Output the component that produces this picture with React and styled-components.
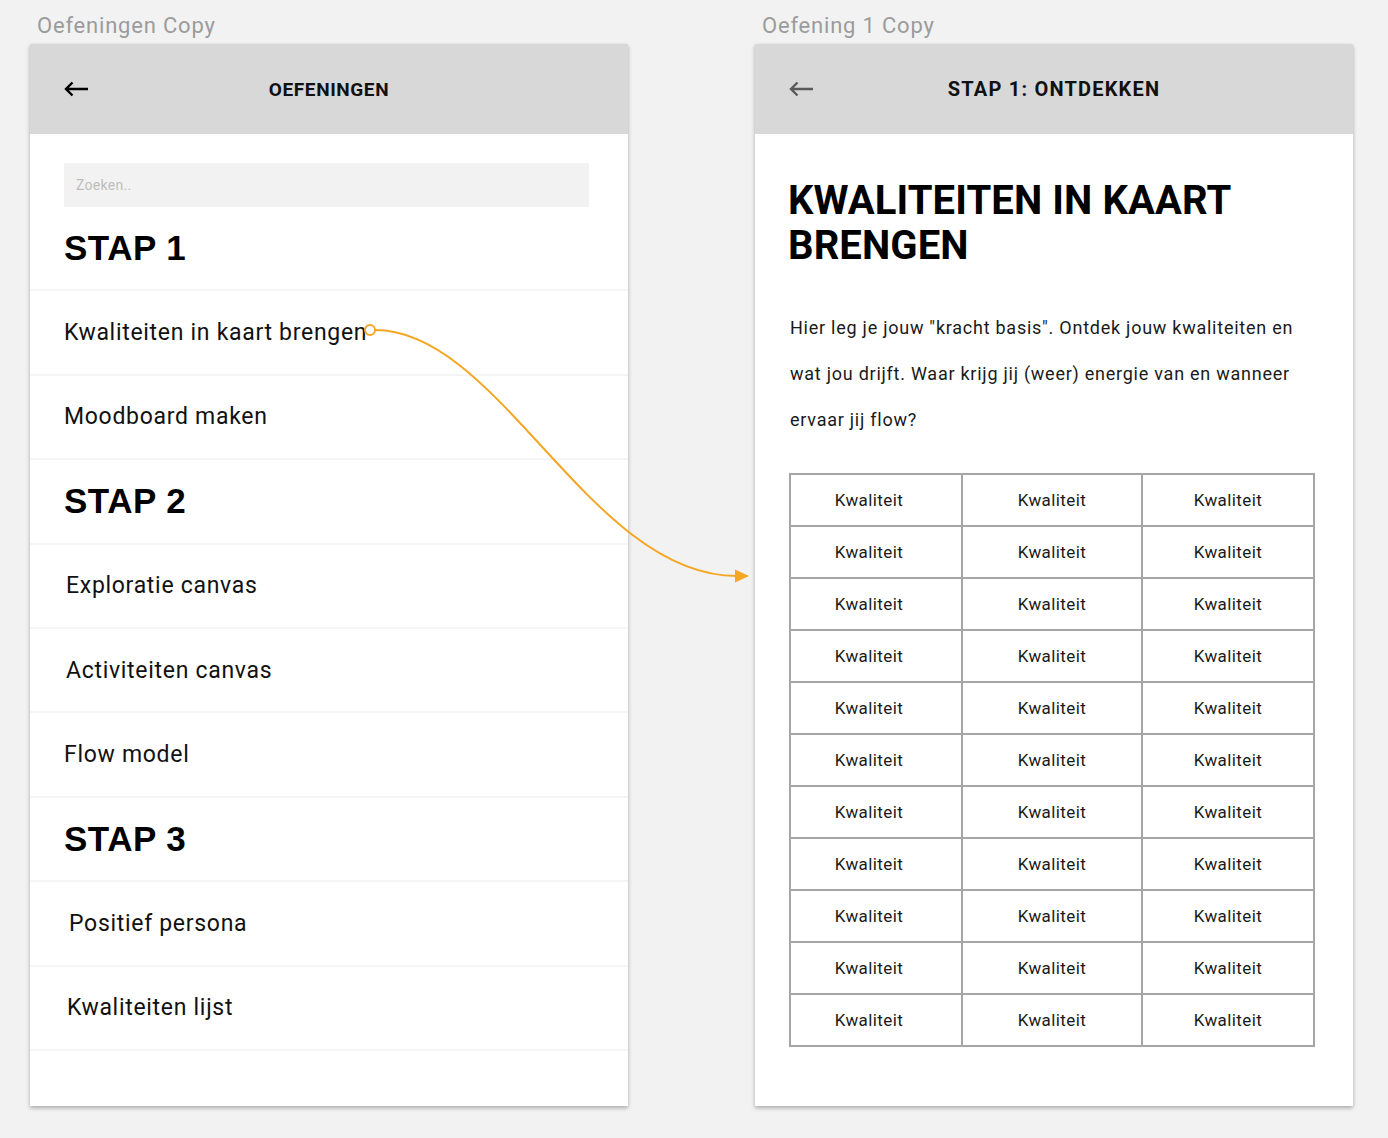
import React from "react"
import styled, { createGlobalStyle } from "styled-components"

const GlobalStyle = createGlobalStyle`
  body {
    margin: 0;
    background: #f2f2f2;
    font-family: Roboto, "Noto Sans", sans-serif;
  }
`

const Canvas = styled.div`
  position: relative;
  display: flex;
  gap: 127px;
  padding: 14px 0 0 30px;
  height: 1124px;
`

const Artboard = styled.div`
  width: 598px;
  display: flex;
  flex-direction: column;
`

const Label = styled.div`
  font-size: 22px;
  line-height: 24px;
  color: #9b9b9b;
  padding-left: 7px;
  margin-bottom: 6px;
  letter-spacing: 0.8px;
`

const Screen = styled.div`
  height: 1062px;
  background: #fff;
  box-shadow: 0 2px 4px rgba(0, 0, 0, 0.3);
  overflow: hidden;
`

const Header = styled.div`
  height: 90px;
  background: #d8d8d8;
  display: grid;
  grid-template-columns: 1fr auto 1fr;
  align-items: center;
  padding: 0 34px;
`

const Title = styled.div`
  font-size: ${(p) => (p.$wide ? 20 : 19)}px;
  font-weight: 700;
  letter-spacing: ${(p) => (p.$wide ? 1.2 : 0.6)}px;
  color: #111;
`

const Back = styled.svg`
  width: 26px;
  height: 16px;
  display: block;
`

const ListBody = styled.div`
  padding-top: 29px;
`

const Search = styled.div`
  margin: 0 39px 0 34px;
  height: 44px;
  background: #f2f2f2;
  display: flex;
  align-items: center;
  padding-left: 12px;
  font-size: 14px;
  color: #bdbdbd;
  letter-spacing: 0.3px;
`

const Row = styled.div`
  box-sizing: border-box;
  height: 84.4px;
  display: flex;
  align-items: center;
  padding-left: ${(p) => 34 + (p.$indent || 0)}px;
  border-bottom: 2px solid #f5f5f5;
`

const StepTitle = styled.h2`
  margin: 0;
  font-family: "Liberation Sans", Arial, sans-serif;
  font-size: 35px;
  font-weight: 700;
  letter-spacing: 0.5px;
  color: #000;
`

const Item = styled.span`
  font-size: 23px;
  letter-spacing: 0.7px;
  color: #111;
`

const Detail = styled.div`
  padding: 44px 40px 0 33px;
`

const BigTitle = styled.h1`
  margin: 0;
  font-size: 40px;
  line-height: 45px;
  font-weight: 700;
  color: #000;
  letter-spacing: 0.1px;
`

const Intro = styled.p`
  margin: 37px 0 0 2px;
  max-width: 520px;
  font-size: 18px;
  line-height: 46px;
  letter-spacing: 0.75px;
  color: #1a1a1a;
`

const Grid = styled.table`
  margin-top: 30px;
  margin-left: 1px;
  border-collapse: collapse;
  table-layout: fixed;
  width: 524px;
`

const Col = styled.col`
  width: ${(p) => p.$w}px;
`

const Cell = styled.td`
  box-sizing: border-box;
  border: 2px solid #a6a6a6;
  height: 52px;
  padding: 0 ${(p) => (p.$first ? 14 : 0)}px 0 0;
  text-align: center;
  font-size: 17px;
  letter-spacing: 0.4px;
  color: #1a1a1a;
`

const Overlay = styled.svg`
  position: absolute;
  left: 0;
  top: 0;
  pointer-events: none;
`

const BackArrow = ({ color }) => (
  <Back viewBox="0 0 26 16">
    <path
      d="M2 8 H24 M8.5 1.5 L2 8 L8.5 14.5"
      fill="none"
      stroke={color}
      strokeWidth="2.4"
      strokeLinecap="butt"
    />
  </Back>
)

const sections = [
  { step: "STAP 1", items: [["Kwaliteiten in kaart brengen", 0], ["Moodboard maken", 0]] },
  { step: "STAP 2", items: [["Exploratie canvas", 2], ["Activiteiten canvas", 2], ["Flow model", 0]] },
  { step: "STAP 3", items: [["Positief persona", 5], ["Kwaliteiten lijst", 3]] },
]

const widths = [172, 180, 172]

export default function App() {
  return (
    <>
      <GlobalStyle />
      <Canvas>
        <Artboard>
          <Label>Oefeningen Copy</Label>
          <Screen>
            <Header>
              <BackArrow color="#000" />
              <Title>OEFENINGEN</Title>
              <span />
            </Header>
            <ListBody>
              <Search>Zoeken..</Search>
              {sections.map((s) => (
                <React.Fragment key={s.step}>
                  <Row>
                    <StepTitle>{s.step}</StepTitle>
                  </Row>
                  {s.items.map(([name, indent]) => (
                    <Row key={name} $indent={indent}>
                      <Item>{name}</Item>
                    </Row>
                  ))}
                </React.Fragment>
              ))}
            </ListBody>
          </Screen>
        </Artboard>

        <Artboard>
          <Label>Oefening 1 Copy</Label>
          <Screen>
            <Header>
              <BackArrow color="#5a5a5a" />
              <Title $wide>STAP 1: ONTDEKKEN</Title>
              <span />
            </Header>
            <Detail>
              <BigTitle>KWALITEITEN IN KAART BRENGEN</BigTitle>
              <Intro>
                Hier leg je jouw "kracht basis". Ontdek jouw kwaliteiten en wat jou drijft. Waar krijg jij
                (weer) energie van en wanneer ervaar jij flow?
              </Intro>
              <Grid>
                <colgroup>
                  {widths.map((w, i) => (
                    <Col key={i} $w={w} />
                  ))}
                </colgroup>
                <tbody>
                  {Array.from({ length: 11 }).map((_, r) => (
                    <tr key={r}>
                      {widths.map((w, c) => (
                        <Cell key={c} $first={c === 0}>Kwaliteit</Cell>
                      ))}
                    </tr>
                  ))}
                </tbody>
              </Grid>
            </Detail>
          </Screen>
        </Artboard>

        <Overlay width="1388" height="1138" viewBox="0 0 1388 1138">
          <path
            d="M375 330 C 500 330, 590 576, 737 576"
            fill="none"
            stroke="#f5a623"
            strokeWidth="2"
          />
          <circle cx="370" cy="330" r="5" fill="#fff" stroke="#f5a623" strokeWidth="2" />
          <polygon points="735,569.5 749,576 735,582.5" fill="#f5a623" />
        </Overlay>
      </Canvas>
    </>
  )
}
